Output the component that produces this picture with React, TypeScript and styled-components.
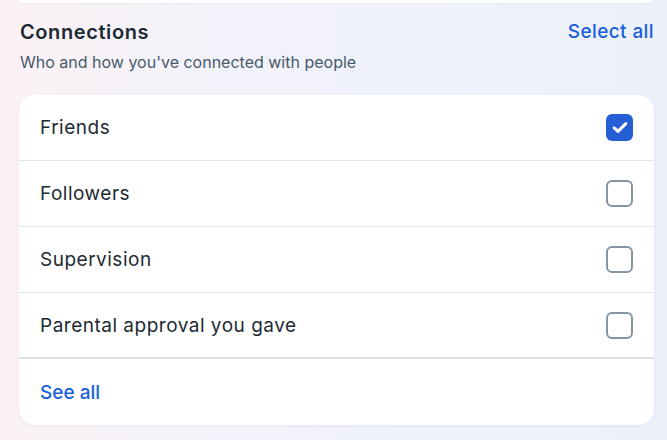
import React, {useState} from 'react'
import styled, {createGlobalStyle} from 'styled-components'

const GlobalStyle = createGlobalStyle`
  html, body {
    margin: 0;
    padding: 0;
  }
  body {
    width: 667px;
    height: 440px;
    overflow: hidden;
    font-family: Inter, "Noto Sans", "Liberation Sans", sans-serif;
    background: linear-gradient(90deg, #fbf2f5 0%, #f3f2fa 30%, #eef2fb 70%, #ebf0fa 100%);
  }
`

const Page = styled.div`
  display: flex;
  flex-direction: column;
  padding: 0 13px 0 19px;
  height: 440px;
  box-sizing: border-box;
`

const TopCard = styled.div`
  height: 3px;
  margin: 0 2px 0 1px;
  background: #fff;
  border-radius: 0 0 14px 14px;
  box-shadow: 0 1px 3px rgba(0, 0, 0, 0.04);
`

const Header = styled.div`
  display: flex;
  justify-content: space-between;
  align-items: flex-start;
  padding: 15px 0 0 1px;
`

const Title = styled.h2`
  margin: 0;
  font-size: 20px;
  font-weight: 600;
  letter-spacing: 0.6px;
  line-height: 28px;
  color: #1c2b33;
`

const SelectAll = styled.button`
  background: none;
  border: none;
  padding: 0;
  font: inherit;
  font-size: 19px;
  font-weight: 500;
  letter-spacing: 0.4px;
  line-height: 28px;
  color: #1a5fd8;
  cursor: pointer;
`

const Subtitle = styled.p`
  margin: 6px 0 0 1px;
  font-size: 16px;
  line-height: 20px;
  color: #465a69;
`

const Card = styled.div`
  margin-top: 23px;
  background: #fff;
  border-radius: 16px;
  overflow: hidden;
  box-shadow: 0 1px 4px rgba(20, 40, 80, 0.05);
`

const Row = styled.label`
  display: flex;
  align-items: center;
  justify-content: space-between;
  height: 65px;
  padding: 0 21px;
  border-bottom: 1px solid #e2e5ea;
  cursor: pointer;
  &:last-of-type {
    height: 64px;
    border-bottom: 2px solid #dce1e6;
  }
`

const RowText = styled.span`
  font-size: 19px;
  letter-spacing: 0.5px;
  color: #1c2b33;
`

const Box = styled.span<{$checked: boolean}>`
  width: 27px;
  height: 27px;
  box-sizing: border-box;
  border-radius: 6px;
  display: flex;
  align-items: center;
  justify-content: center;
  background: ${p => (p.$checked ? '#255fd6' : '#fff')};
  border: ${p => (p.$checked ? 'none' : '2.5px solid #8595a4')};
`

const Footer = styled.div`
  height: 66px;
  display: flex;
  align-items: center;
  padding: 0 21px;
`

const SeeAll = styled.button`
  background: none;
  border: none;
  padding: 0;
  font: inherit;
  font-size: 19px;
  font-weight: 500;
  color: #1a5fd8;
  cursor: pointer;
`

const items = ['Friends', 'Followers', 'Supervision', 'Parental approval you gave']

export default function App() {
  const [checked, setChecked] = useState<Record<string, boolean>>({Friends: true})

  const toggle = (name: string) => setChecked(prev => ({...prev, [name]: !prev[name]}))
  const selectAll = () => setChecked(Object.fromEntries(items.map(i => [i, true])))

  return <>
    <GlobalStyle/>
    <Page>
      <TopCard/>
      <Header>
        <Title>Connections</Title>
        <SelectAll type="button" onClick={selectAll}>Select all</SelectAll>
      </Header>
      <Subtitle>Who and how you've connected with people</Subtitle>
      <Card>
        {items.map(item => (
          <Row key={item} onClick={() => toggle(item)}>
            <RowText>{item}</RowText>
            <Box $checked={!!checked[item]}>
              {checked[item] ? (
                <svg width="16" height="13" viewBox="0 0 16 13">
                  <path d="M2.2 6.8l3.8 3.6L13.8 2.6" fill="none" stroke="#fff" strokeWidth="3"
                        strokeLinecap="round" strokeLinejoin="round"/>
                </svg>
              ) : null}
            </Box>
          </Row>
        ))}
        <Footer>
          <SeeAll type="button">See all</SeeAll>
        </Footer>
      </Card>
    </Page>
  </>
}
